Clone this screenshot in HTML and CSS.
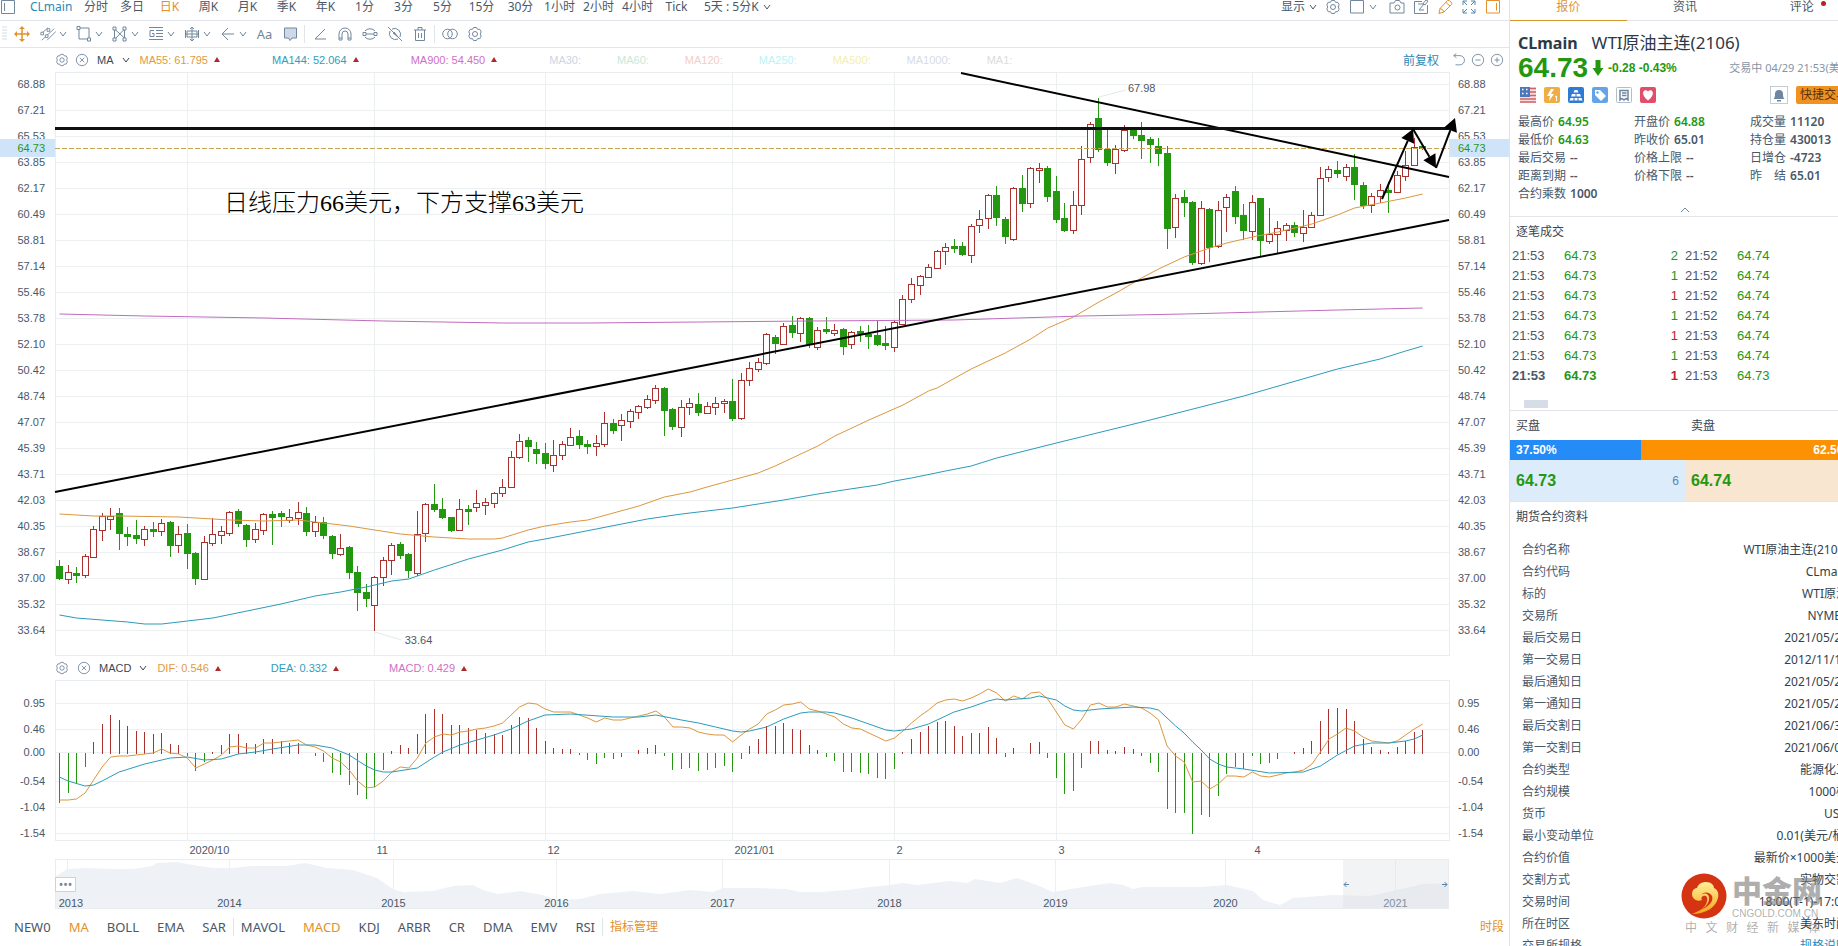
FILE: index.html
```html
<!DOCTYPE html>
<html lang="zh-CN">
<head>
    <meta charset="UTF-8">
    <title>CLmain WTI原油主连(2106)</title>
    <link rel="stylesheet" href="styles.css">
</head>
<body>
    <svg class="sprite" width="0" height="0">
        <symbol id="chev" viewBox="0 0 8 8"><path d="M1 2l3 4 3-4"/></symbol>
        <symbol id="gear" viewBox="0 0 16 16"><path d="M6.500 1.500h3l1 1.800h2.200l1.500 2.600-1 2.100 1 2.100-1.500 2.600h-2.200l-1 1.800h-3l-1-1.800H3.300L1.800 10.100l1-2.100-1-2.100 1.500-2.600h2.200z"/><circle cx="8" cy="8" r="2.500"/></symbol>
        <symbol id="close" viewBox="0 0 16 16"><circle cx="8" cy="8" r="6.500"/><path d="M5.500 5.500l5 5M10.500 5.500l-5 5"/></symbol>
    </svg>

    <div class="app">
        <main class="chart-side">
            <nav class="period-bar">
                <button class="icon-btn"><svg viewBox="0 0 16 16"><path d="M1.500 1.500h13v13h-13zM4.500 4v8"/></svg></button>
                <a class="symbol-name" href="#">CLmain</a>
                <a class="period narrow" href="#">分时</a>
                <a class="period narrow" href="#">多日</a>
                <a class="period active" href="#">日K</a>
                <a class="period" href="#">周K</a>
                <a class="period" href="#">月K</a>
                <a class="period" href="#">季K</a>
                <a class="period" href="#">年K</a>
                <a class="period" href="#">1分</a>
                <a class="period" href="#">3分</a>
                <a class="period" href="#">5分</a>
                <a class="period" href="#">15分</a>
                <a class="period" href="#">30分</a>
                <a class="period" href="#">1小时</a>
                <a class="period" href="#">2小时</a>
                <a class="period" href="#">4小时</a>
                <a class="period" href="#">Tick</a>
                <button class="custom-period">5天 : 5分K <svg class="chev"><use href="#chev"/></svg></button>
                <div class="period-tools">
                    <button class="menu-btn">显示<svg class="chev"><use href="#chev"/></svg></button>
                    <button class="icon-btn"><svg><use href="#gear"/></svg></button>
                    <button class="menu-btn layout-btn"><svg class="ic" viewBox="0 0 16 16"><path d="M1.500 1.500h13v12.500h-13z"/></svg><svg class="chev"><use href="#chev"/></svg></button>
                    <button class="icon-btn"><svg viewBox="0 0 16 16"><path d="M1 4h4l1.500-2.500h4L12 4h3v10H1z"/><circle cx="8.500" cy="8.500" r="2.500"/></svg></button>
                    <button class="icon-btn"><svg viewBox="0 0 16 16"><path d="M14.500 6v8.500h-13v-12H9M5 5h6l-5 6h5M10 4.500l3-3.500 2 1-3 4z"/></svg></button>
                    <button class="icon-btn orange"><svg viewBox="0 0 16 16"><path d="M2 14.500l1-5L10.500 1.500q2-.5 3.500 1.500t.5 2.500L7 13zM9 3.500l4 3.500M3 9.500q3 .5 4 3.500"/></svg></button>
                    <button class="icon-btn blue"><svg viewBox="0 0 16 16"><path d="M2 6V2h4M10 2h4v4M14 10v4h-4M6 14H2v-4M2 2l4 4M14 2l-4 4M14 14l-4-4M2 14l4-4"/></svg></button>
                    <button class="icon-btn orange"><svg viewBox="0 0 16 16"><path d="M1.500 1.500h13v12.500h-13zM11.500 4v7.500"/></svg></button>
                </div>
            </nav>

            <div class="draw-bar">
                <svg class="grip" viewBox="0 0 6 16"><path d="M0 1h5M0 4h5M0 7h5M0 10h5M0 13h5"/></svg>
                <button class="tool single orange"><svg class="ic" viewBox="0 0 16 16"><path d="M8 1v14M1 8h14" stroke-width="1.500"/><path d="M8 0l3 3H5zM8 16l3-3H5zM0 8l3-3v6zM16 8l-3-3v6z" fill="currentColor" stroke="none"/></svg></button>
                <button class="tool"><svg class="ic" viewBox="0 0 18 16"><path d="M2 15L16 2M8 15l10-10M1 8L9 1"/><path d="M1 6h3v3H1zM8 2h3v3H8zM6 9h3v3H6z" fill="#fff"/></svg><svg class="chev"><use href="#chev"/></svg></button>
                <button class="tool"><svg class="ic" viewBox="0 0 16 16"><path d="M3 2h10v11H3z"/><path d="M1 .5h3v3H1zM11.500 12h3v3h-3z" fill="#fff"/></svg><svg class="chev"><use href="#chev"/></svg></button>
                <button class="tool"><svg class="ic" viewBox="0 0 16 16"><path d="M2.500 14V3l10 9V3L3 13M12.500 3v11"/><path d="M1 1h3v3H1zM11 1h3v3h-3zM1 12h3v3H1zM11 12h3v3h-3z" fill="#fff"/></svg><svg class="chev"><use href="#chev"/></svg></button>
                <button class="tool"><svg class="ic" viewBox="0 0 16 16"><path d="M1 1.500h14M8 4.500h7M8 7.500h7M8 10.500h7M1 13.500h14M6 4.500H2v6h4v-3H4"/></svg><svg class="chev"><use href="#chev"/></svg></button>
                <button class="tool"><svg class="ic" viewBox="0 0 16 16"><path d="M8 1v14M1 8h14M1.500 4v8M14.500 4v8M3 5h10v6H3zM6 3l2-2 2 2M6 13l2 2 2-2"/></svg><svg class="chev"><use href="#chev"/></svg></button>
                <button class="tool"><svg class="ic" viewBox="0 0 16 16"><path d="M14 8H2M8 2L2 8l6 6"/></svg><svg class="chev"><use href="#chev"/></svg></button>
                <button class="tool single">Aa</button>
                <button class="tool single"><svg class="ic" viewBox="0 0 16 16"><path d="M2.500 2h12v10H10l-2 2.500L6.500 12h-4z" fill="#cdd9e6"/></svg></button>
                <span class="split"></span>
                <button class="tool single"><svg class="ic" viewBox="0 0 16 16"><path d="M13 3L3 13h11"/></svg></button>
                <button class="tool single"><svg class="ic" viewBox="0 0 16 16"><path d="M2 14V8a6 6 0 0 1 12 0v6h-3V8a3 3 0 0 0-6 0v6zM2 12h3M11 12h3"/></svg></button>
                <button class="tool single"><svg class="ic" viewBox="0 0 16 16"><path d="M3 5a6 5 0 0 1 10 0M3 11a6 5 0 0 0 10 0M4 8h8"/><path d="M1 6.500h3v3H1zM12 6.500h3v3h-3z"/></svg></button>
                <button class="tool single"><svg class="ic" viewBox="0 0 16 16"><path d="M5 3a6 6 0 0 1 8 8M11 13a6 6 0 0 1-8-8M1 1l14 14M7 6l4 5-5-4"/></svg></button>
                <button class="tool single"><svg class="ic" viewBox="0 0 16 16"><path d="M2 4h12M6 4V1.500h4V4M3.500 4v10.500h9V4M6.500 7v5M9.500 7v5"/></svg></button>
                <span class="split"></span>
                <button class="tool single"><svg class="ic" viewBox="0 0 16 16"><circle cx="5.500" cy="8" r="4.800"/><circle cx="10.500" cy="8" r="4.800"/></svg></button>
                <button class="tool single"><svg class="ic"><use href="#gear"/></svg></button>
            </div>

            <div class="legend">
                <button class="mini"><svg><use href="#gear"/></svg></button>
                <button class="mini"><svg><use href="#close"/></svg></button>
                <button class="study">MA<svg class="chev"><use href="#chev"/></svg></button>
                <span class="val c-ma55">MA55: 61.795</span>
                <span class="val c-ma144">MA144: 52.064</span>
                <span class="val c-ma900">MA900: 54.450</span>
                <span class="idle c-ma30">MA30:</span>
                <span class="idle c-ma60">MA60:</span>
                <span class="idle c-ma120">MA120:</span>
                <span class="idle c-ma250">MA250:</span>
                <span class="idle c-ma500">MA500:</span>
                <span class="idle c-ma1000">MA1000:</span>
                <span class="idle c-ma1">MA1:</span>
                <div class="legend-tools">
                    <a href="#">前复权</a>
                    <button class="mini"><svg viewBox="0 0 16 16"><path d="M2 3h7a5 5 0 0 1 0 10.500H4M5 .5L2 3l3 2.500"/></svg></button>
                    <button class="mini"><svg viewBox="0 0 16 16"><circle cx="8" cy="8" r="6.500"/><path d="M5 8h6"/></svg></button>
                    <button class="mini"><svg viewBox="0 0 16 16"><circle cx="8" cy="8" r="6.500"/><path d="M5 8h6M8 5v6"/></svg></button>
                </div>
            </div>

            <div class="pane price-pane">
                <div class="axis axis-left"><ol id="price-left"></ol><span class="tag">64.73</span></div>
                <svg class="plot" id="price-plot"></svg>
                <div class="axis axis-right"><ol id="price-right"></ol><span class="tag">64.73</span></div>
                <p class="note">日线压力66美元，下方支撑63美元</p>
            </div>

            <div class="legend macd-legend">
                <button class="mini"><svg><use href="#gear"/></svg></button>
                <button class="mini"><svg><use href="#close"/></svg></button>
                <button class="study">MACD<svg class="chev"><use href="#chev"/></svg></button>
                <span class="val c-ma55">DIF: 0.546</span>
                <span class="val c-ma144">DEA: 0.332</span>
                <span class="val c-ma900">MACD: 0.429</span>
            </div>

            <div class="pane macd-pane">
                <div class="axis axis-left"><ol id="macd-left"></ol></div>
                <svg class="plot" id="macd-plot"></svg>
                <div class="axis axis-right"><ol id="macd-right"></ol></div>
            </div>

            <div class="pane nav-pane">
                <svg class="plot" id="nav-plot"></svg>
                <button class="more">•••</button>
            </div>

            <footer class="study-bar">
                <a href="#">NEW0</a>
                <a class="active" href="#">MA</a>
                <a href="#">BOLL</a>
                <a href="#">EMA</a>
                <a href="#">SAR</a>
                <span class="split"></span>
                <a href="#">MAVOL</a>
                <a class="active" href="#">MACD</a>
                <a href="#">KDJ</a>
                <a href="#">ARBR</a>
                <a href="#">CR</a>
                <a href="#">DMA</a>
                <a href="#">EMV</a>
                <a href="#">RSI</a>
                <span class="split"></span>
                <a class="active cn" href="#">指标管理</a>
                <a class="active cn session" href="#">时段</a>
            </footer>
        </main>

        <aside class="quote-side">
            <div class="quote">
                <nav class="tabs">
                    <a class="active" href="#">报价</a>
                    <a href="#">资讯</a>
                    <a href="#">评论<i class="dot"></i></a>
                </nav>

                <section class="summary">
                    <h1><b>CLmain</b>WTI原油主连(2106)</h1>
                    <div class="last">
                        <strong>64.73</strong>
                        <svg viewBox="0 0 12 18"><path d="M3.500 1h5v8h3L6 17 .5 9h3z"/></svg>
                        <span class="change">-0.28 -0.43%</span>
                        <span class="status">交易中 04/29 21:53(美东)</span>
                    </div>
                    <div class="badges">
                        <svg viewBox="0 0 16 16"><path d="M0 0h16v16H0z" fill="#f6dede"/><path d="M0 1.500h16M0 5h16M0 8.500h16M0 12h16M0 15h16" stroke="#cc6468" stroke-width="1.500"/><path d="M0 0h10v10H0z" fill="#4c78ba"/><path d="M2 2.500h1.500M6 2.500h1.500M2 6.500h1.500M6 6.500h1.500" stroke="#fff" stroke-width="1.500"/></svg>
                        <svg viewBox="0 0 16 16"><rect width="16" height="16" rx="2" fill="#f0ad43"/><path d="M7 2L3 9h3l-1 5 5-7H7l3-5z" fill="#fff"/><path d="M11 10l1.500-1v5" fill="none" stroke="#fff"/></svg>
                        <svg viewBox="0 0 16 16"><rect width="16" height="16" rx="2" fill="#2d7bd3"/><path d="M6.500 3h3l1 2.500h-5zM4 7h3.500v2.500H3zM8.500 7H12l1 2.500H8.500zM2.500 11h3v2.500h-4zM6.500 11h3v2.500h-3zM10.500 11h3l1 2.500h-4z" fill="#fff"/></svg>
                        <svg viewBox="0 0 16 16"><rect width="16" height="16" rx="2" fill="#62a5e6"/><path d="M3 3h5l6 6-5 5-6-6z" fill="#fff"/><circle cx="5.500" cy="5.500" r="1.200" fill="#62a5e6"/></svg>
                        <svg viewBox="0 0 16 16"><rect x=".5" y=".5" width="15" height="15" rx="1" fill="#fff" stroke="#b4becb"/><path d="M4 3.500h8v9.500l-2-1.500-2 1.500-2-1.500L4 13zM6 6h4.500M6 8.500h4.500" fill="none" stroke="#6f86a0" stroke-width="1.500"/></svg>
                        <svg viewBox="0 0 16 16"><rect width="16" height="16" rx="2" fill="#e04e69"/><path d="M8 13.500C-1 7 4.500 .5 8 4.500 11.500.5 17 7 8 13.500z" fill="#fff"/></svg>
                        <button class="bell"><svg viewBox="0 0 16 16"><path d="M2.500 12q1.500-1 1.500-5a4 4 0 0 1 8 0q0 4 1.500 5zM6 13h4v1.500H6z"/></svg></button>
                        <button class="trade">快捷交易</button>
                    </div>
                    <dl class="stats">
                        <div><dt>最高价</dt><dd class="down">64.95</dd></div>
                        <div><dt>开盘价</dt><dd class="down">64.88</dd></div>
                        <div><dt>成交量</dt><dd>11120</dd></div>
                        <div><dt>最低价</dt><dd class="down">64.63</dd></div>
                        <div><dt>昨收价</dt><dd>65.01</dd></div>
                        <div><dt>持仓量</dt><dd>430013</dd></div>
                        <div><dt>最后交易</dt><dd>--</dd></div>
                        <div><dt>价格上限</dt><dd>--</dd></div>
                        <div><dt>日增仓</dt><dd>-4723</dd></div>
                        <div><dt>距离到期</dt><dd>--</dd></div>
                        <div><dt>价格下限</dt><dd>--</dd></div>
                        <div><dt>昨　结</dt><dd>65.01</dd></div>
                        <div><dt>合约乘数</dt><dd>1000</dd></div>
                    </dl>
                    <button class="fold"><svg viewBox="0 0 10 6"><path d="M1 5l4-4 4 4"/></svg></button>
                </section>

                <section class="ticks">
                    <h2>逐笔成交</h2>
                    <table>
                        <tr><td>21:53</td><td class="px">64.73</td><td class="vol">2</td><td>21:52</td><td class="px">64.74</td></tr>
                        <tr><td>21:53</td><td class="px">64.73</td><td class="vol">1</td><td>21:52</td><td class="px">64.74</td></tr>
                        <tr><td>21:53</td><td class="px">64.73</td><td class="vol buy">1</td><td>21:52</td><td class="px">64.74</td></tr>
                        <tr><td>21:53</td><td class="px">64.73</td><td class="vol">1</td><td>21:52</td><td class="px">64.74</td></tr>
                        <tr><td>21:53</td><td class="px">64.73</td><td class="vol buy">1</td><td>21:53</td><td class="px">64.74</td></tr>
                        <tr><td>21:53</td><td class="px">64.73</td><td class="vol">1</td><td>21:53</td><td class="px">64.74</td></tr>
                        <tr><td class="new">21:53</td><td class="px new">64.73</td><td class="vol buy new">1</td><td>21:53</td><td class="px">64.73</td></tr>
                    </table>
                    <div class="thumb"></div>
                </section>

                <section class="book">
                    <div class="book-head"><h2>买盘</h2><h2>卖盘</h2></div>
                    <div class="ratio"><span class="bid-ratio" style="width: 37.5%">37.50%</span><span class="ask-ratio">62.50%</span></div>
                    <div class="best">
                        <div class="bid"><b>64.73</b><span>6</span></div>
                        <div class="ask"><b>64.74</b></div>
                    </div>
                </section>

                <section class="contract">
                    <h2>期货合约资料</h2>
                    <table>
                        <tr><th>合约名称</th><td>WTI原油主连(2106)</td></tr>
                        <tr><th>合约代码</th><td>CLmain</td></tr>
                        <tr><th>标的</th><td>WTI原油</td></tr>
                        <tr><th>交易所</th><td>NYMEX</td></tr>
                        <tr><th>最后交易日</th><td>2021/05/20</td></tr>
                        <tr><th>第一交易日</th><td>2012/11/19</td></tr>
                        <tr><th>最后通知日</th><td>2021/05/24</td></tr>
                        <tr><th>第一通知日</th><td>2021/05/24</td></tr>
                        <tr><th>最后交割日</th><td>2021/06/30</td></tr>
                        <tr><th>第一交割日</th><td>2021/06/01</td></tr>
                        <tr><th>合约类型</th><td>能源化工</td></tr>
                        <tr><th>合约规模</th><td>1000桶</td></tr>
                        <tr><th>货币</th><td>USD</td></tr>
                        <tr><th>最小变动单位</th><td>0.01(美元/桶)</td></tr>
                        <tr><th>合约价值</th><td>最新价×1000美元</td></tr>
                        <tr><th>交割方式</th><td>实物交割</td></tr>
                        <tr><th>交易时间</th><td>18:00(T-1)-17:00</td></tr>
                        <tr><th>所在时区</th><td>美东时间</td></tr>
                        <tr><th>交易所规格</th><td><a href="#">规格说明</a></td></tr>
                    </table>
                </section>
            </div>

            <div class="watermark">
                <div class="brand">
                    <svg viewBox="0 0 46 46">
                        <defs><linearGradient id="gold" x1="0" y1="0" x2="0" y2="1"><stop offset="0" stop-color="#fff09a"/><stop offset="1" stop-color="#f5a51d"/></linearGradient></defs>
                        <circle cx="23" cy="23" r="22.500" fill="#d53413"/>
                        <path d="M11 41c8-3 14-7 15-13 1-4-1-6-4-5-2 1-2 3-1 4-5 2-10-1-10-6 0-4 3-6 5-6 1-4 5-6 9-6 5 0 8 3 8 6 4 2 5 6 4 10-2 9-12 16-26 16z" fill="url(#gold)"/>
                        <path d="M20 22c4-3 9-1 8 5-1 5-5 8-9 10 9-3 14-9 12-14-2-4-8-5-11-1z" fill="#d53413"/>
                    </svg>
                    <div><b>中金网</b><span>CNGOLD.COM.CN</span></div>
                </div>
                <p><span>中</span><span>文</span><span>财</span><span>经</span><span>新</span><span>媒</span><span>体</span></p>
            </div>
        </aside>
    </div>

    <script src="chart.js"></script>
</body>
</html>
```
FILE: styles.css
```css
* {
    box-sizing: border-box;
}

body, html {
    margin: 0;
    padding: 0;
    height: 100%;
    overflow: hidden;
    background: #fff;
    color: #4a5868;
    font-family: "Noto Sans", "Noto Sans CJK SC", sans-serif;
    font-size: 12px;
    line-height: 16px;
}

a {
    color: inherit;
    text-decoration: none;
}

button {
    display: flex;
    align-items: center;
    margin: 0;
    padding: 0;
    border: none;
    background: none;
    color: #71879d;
    font: inherit;
    cursor: pointer;
}

h1, h2, p, ol, dl, dd {
    margin: 0;
    padding: 0;
    font-weight: normal;
}

ol {
    list-style: none;
}

svg {
    display: block;
    flex: none;
}

button svg {
    fill: none;
    stroke: currentColor;
}

.sprite {
    position: absolute;
}

.chev {
    width: 8px;
    height: 8px;
}

.orange {
    color: #e2912b;
}

.blue {
    color: #5687ac;
}

.split {
    width: 1px;
    height: 18px;
    background: #e0e5ea;
}

.app {
    display: grid;
    grid-template-columns: minmax(0, 1fr) 329px;
    height: 100%;
}

/* top bars */

.period-bar {
    display: flex;
    align-items: center;
    height: 21px;
    padding-bottom: 6px;
    border-bottom: 1px solid #e1e5e9;
}

.icon-btn svg {
    width: 16px;
    height: 16px;
}

.symbol-name {
    width: 62px;
    padding-left: 14px;
    color: #2a8ab8;
}

.period {
    width: 39px;
    text-align: center;
}

.period.narrow {
    width: 36px;
}

.period.active {
    color: #e2912b;
}

.custom-period {
    gap: 4px;
    padding-left: 8px;
    color: #4a5868;
}

.period-tools {
    display: flex;
    gap: 8px;
    margin-left: auto;
    padding-right: 8px;
}

.menu-btn {
    gap: 4px;
}

.menu-btn:first-child {
    color: #4a5868;
}

.layout-btn {
    margin-right: 4px;
}

.draw-bar {
    display: flex;
    align-items: center;
    height: 27px;
    border-bottom: 1px solid #e1e5e9;
}

.grip {
    width: 6px;
    height: 16px;
    margin-left: 2px;
    stroke: #d7dde3;
}

.ic {
    width: 16px;
    height: 16px;
}

.tool {
    gap: 3px;
    width: 36px;
    padding-left: 4px;
    font-size: 13px;
}

.tool.single {
    justify-content: center;
    width: 25px;
    padding: 0;
}

.draw-bar .orange {
    width: 28px;
}

.draw-bar .split {
    margin: 0 2px;
}

/* legends */

.legend {
    display: flex;
    align-items: center;
    height: 23px;
    padding-left: 55px;
    font-family: "Liberation Sans", Arial, sans-serif;
    font-size: 11px;
}

.mini {
    margin-right: 6px;
}

.mini svg {
    width: 14px;
    height: 14px;
}

.study {
    gap: 8px;
    margin: 0 10px 0 2px;
    color: #3c4856;
}

.val {
    display: flex;
    align-items: center;
    margin-right: 52px;
}

.val::after {
    content: "";
    margin-left: 6px;
    border: 3px solid transparent;
    border-top: none;
    border-bottom: 5px solid #b0282c;
}

.idle {
    margin-right: 36px;
}

.macd-legend {
    height: 24px;
}

.macd-legend .mini {
    margin-right: 8px;
}

.macd-legend .study {
    margin-left: 0;
}

.macd-legend .val {
    margin-right: 50px;
}

.c-ma55 { color: #e19a43; }
.c-ma144 { color: #2ca0bd; }
.c-ma900 { color: #cf6fc6; }
.c-ma30 { color: #cbd5e6; }
.c-ma60 { color: #c8e9d8; }
.c-ma120 { color: #f4cdc9; }
.c-ma250 { color: #b9f3f7; }
.c-ma500 { color: #f3efb0; }
.c-ma1000 { color: #d5dce8; }
.c-ma1 { color: #dcdcdc; }

.legend-tools {
    display: flex;
    align-items: center;
    margin-left: auto;
    font-family: "Noto Sans CJK SC", sans-serif;
    font-size: 12px;
}

.legend-tools .mini {
    margin-right: 5px;
}

.legend-tools a {
    margin-right: 13px;
    color: #2f88b5;
}

/* chart panes */

.pane {
    display: grid;
    grid-template-columns: 55px minmax(0, 1fr) 60px;
    position: relative;
}

.plot {
    width: 100%;
    overflow: visible;
    font-family: "Liberation Sans", Arial, sans-serif;
    font-size: 11px;
    fill: #4a5868;
}

.price-pane .plot {
    height: 585px;
}

.macd-pane .plot {
    height: 179px;
}

.nav-pane .plot {
    grid-column: 2;
    height: 50px;
}

.axis {
    position: relative;
    font-family: "Liberation Sans", Arial, sans-serif;
    font-size: 11px;
}

.axis li {
    height: 26px;
    line-height: 26px;
}

.axis-left {
    padding-right: 10px;
    text-align: right;
}

.axis-right {
    padding-left: 9px;
}

.macd-pane .axis {
    padding-top: 10px;
}

.macd-pane li:nth-child(3) {
    height: 20px;
    margin-bottom: 6px;
    line-height: 20px;
}

.tag {
    position: absolute;
    top: 68px;
    left: 0;
    right: 0;
    height: 18px;
    padding: inherit;
    background: #cfe4f9;
    color: #249711;
    line-height: 18px;
}

.note {
    position: absolute;
    top: 116px;
    left: 224px;
    color: #000;
    font-family: "Liberation Serif", "Noto Sans CJK SC", serif;
    font-size: 24px;
    font-weight: 300;
    line-height: 32px;
}

.grid {
    stroke: #ecf0f1;
    shape-rendering: crispEdges;
}

.frame {
    fill: none;
    stroke: #e9edef;
    shape-rendering: crispEdges;
}

.up {
    fill: #fff;
    stroke: #a9322f;
    shape-rendering: crispEdges;
}

.dn {
    fill: #249711;
    stroke: #249711;
    shape-rendering: crispEdges;
}

.line {
    fill: none;
}

.line-ma55 { stroke: #dc963f; }
.line-ma144 { stroke: #2c9aba; }
.line-ma900 { stroke: #bf6cbe; }

.last-line {
    stroke: #c8a552;
    stroke-dasharray: 5 2;
    shape-rendering: crispEdges;
}

.lead {
    stroke: #e3e8ea;
}

.trend {
    fill: none;
    stroke: #000;
    stroke-width: 2;
}

.level {
    stroke: #111;
    stroke-width: 3;
}

.arrow {
    fill: #000;
}

.nav-area {
    fill: #eef2f6;
}

.nav-window {
    fill: #dbe0e6;
    opacity: 0.4;
}

.nav-arrow {
    fill: none;
    stroke: #5f83a8;
}

.more {
    position: absolute;
    left: 55px;
    top: 18px;
    justify-content: center;
    width: 21px;
    height: 15px;
    border: 1px solid #ccd3da;
    background: #fff;
    font-size: 12px;
}

.study-bar {
    display: flex;
    align-items: center;
    height: 36px;
    padding: 0 5px;
    font-size: 13px;
}

.study-bar a {
    padding: 0 9px;
}

.study-bar .split {
    margin: 0 -2px;
}

.study-bar .active {
    color: #e2912b;
}

.study-bar .cn {
    font-size: 12px;
}

.study-bar .session {
    margin-left: auto;
    padding-right: 0;
}

/* quote panel */

.quote-side {
    position: relative;
    height: 100%;
    overflow: hidden;
    border-left: 1px solid #dfe3e7;
}

/* the panel is wider than its column, the right edge slides out of view */
.quote {
    width: 350px;
}

.tabs {
    display: flex;
    height: 21px;
    border-bottom: 1px solid #e1e5e9;
    text-align: center;
}

.tabs a {
    position: relative;
    flex: 1;
    height: 21px;
    line-height: 14px;
}

.tabs .active {
    border-bottom: 1px solid #d7952f;
    color: #dd9736;
}

.dot {
    position: absolute;
    left: 78px;
    top: 1px;
    width: 5px;
    height: 5px;
    border-radius: 50%;
    background: #b9201f;
}

.summary {
    padding: 10px 0 0 8px;
    border-bottom: 1px solid #e1e5e9;
}

h1 {
    color: #2c3947;
    font-size: 17px;
    line-height: 24px;
}

h1 b {
    margin-right: 14px;
    font-size: 16px;
}

.last {
    display: flex;
    align-items: center;
    height: 26px;
    padding-right: 6px;
}

.last strong {
    color: #249711;
    font-family: "Liberation Sans", Arial, sans-serif;
    font-size: 28px;
    line-height: 26px;
}

.last svg {
    width: 12px;
    height: 18px;
    margin: 0 4px;
    fill: #249711;
}

.change {
    color: #249711;
    font-family: "Liberation Sans", Arial, sans-serif;
    font-weight: bold;
}

.status {
    margin-left: auto;
    color: #8794a3;
    font-size: 11px;
    white-space: nowrap;
}

.badges {
    display: flex;
    align-items: center;
    gap: 8px;
    height: 28px;
    padding: 0 8px 0 2px;
}

.badges svg {
    width: 16px;
    height: 16px;
}

.bell {
    margin-left: auto;
    border: 1px solid #c3ccd6;
}

.bell svg {
    fill: #6f86a0;
    stroke: none;
}

.trade {
    height: 18px;
    padding: 0 4px;
    border-radius: 2px;
    background: #f09221;
    color: #5a3408;
}

.stats {
    display: grid;
    grid-template-columns: repeat(3, 116px);
    padding-top: 4px;
}

.stats div {
    display: flex;
    gap: 4px;
    height: 18px;
    line-height: 18px;
}

.stats dd {
    font-weight: 600;
}

.stats .down {
    color: #249711;
}

.fold {
    justify-content: center;
    width: 334px;
    height: 13px;
}

.fold svg {
    width: 10px;
    height: 6px;
}

h2 {
    padding-left: 6px;
    color: #3a4653;
    font-size: 12px;
    line-height: 29px;
}

.ticks {
    border-bottom: 1px solid #e1e5e9;
}

table {
    border-spacing: 0;
}

.ticks table {
    table-layout: fixed;
    width: 277px;
    font-family: "Liberation Sans", Arial, sans-serif;
    font-size: 13px;
}

.ticks td {
    width: 52px;
    height: 20px;
    padding: 0 0 0 2px;
}

.ticks .vol {
    width: 69px;
    padding-right: 5px;
    text-align: right;
}

.ticks .px, .ticks .vol {
    color: #249711;
}

.ticks .vol.buy {
    color: #c02128;
}

.new {
    font-weight: bold;
}

.thumb {
    width: 24px;
    height: 8px;
    margin: 14px 14px 2px;
    background: #d7dde6;
}

.book-head {
    display: grid;
    grid-template-columns: 1fr 1fr;
}

.ratio {
    display: flex;
    height: 20px;
    color: #fff;
    font-family: "Liberation Sans", Arial, sans-serif;
    font-weight: bold;
    line-height: 20px;
}

.bid-ratio {
    padding-left: 6px;
    background: #258bf6;
}

.ask-ratio {
    flex: 1;
    padding-right: 6px;
    background: #fd9104;
    text-align: right;
}

.best {
    display: grid;
    grid-template-columns: 1fr 1fr;
    height: 42px;
    border-bottom: 1px solid #e1e5e9;
    font-family: "Liberation Sans", Arial, sans-serif;
}

.best div {
    display: flex;
    align-items: center;
    justify-content: space-between;
    padding: 0 6px;
}

.best b {
    color: #249711;
    font-size: 16px;
}

.best span {
    color: #5687ac;
}

.bid {
    background: #dcecfb;
}

.ask {
    background: #f8e6d0;
}

.contract table {
    width: 100%;
    margin-top: 8px;
    padding: 0 12px;
}

.contract th, .contract td {
    height: 22px;
    padding: 0;
    font-weight: normal;
    text-align: left;
    white-space: nowrap;
}

.contract td {
    color: #333f4c;
    text-align: right;
}

.contract td a {
    color: #2a8ab8;
}

.watermark {
    position: absolute;
    right: 14px;
    bottom: 10px;
    width: 143px;
    color: rgba(120, 120, 120, 0.6);
}

.brand {
    display: flex;
    gap: 5px;
}

.brand svg {
    width: 46px;
    height: 46px;
}

.brand b {
    display: block;
    font-size: 30px;
    font-weight: 900;
    line-height: 36px;
}

.brand span {
    display: block;
    font-family: "Liberation Sans", Arial, sans-serif;
    font-size: 10px;
    line-height: 10px;
}

.watermark p {
    display: flex;
    justify-content: space-between;
    padding: 0 4px;
    line-height: 17px;
}
```
FILE: chart.js
```js
// [direction, high, body top, body bottom, low], in pane units
const candles = [
    ['d',560,566,579,580],['u',565,572,579,584],['d',567,573,576,583],['u',554,556,575,578],['u',526,529,557,558],
    ['u',513,516,530,541],['u',508,516,519,530],['d',508,513,534,550],['d',527,534,537,546],['d',520,535,539,544],
    ['u',526,529,539,546],['d',522,529,532,537],['u',519,523,531,536],['d',521,522,546,557],['u',526,534,545,553],
    ['d',524,533,554,569],['d',552,553,579,585],['u',536,542,579,579],['u',518,534,543,546],['u',526,531,535,544],
    ['u',511,512,533,536],['d',509,511,524,527],['d',524,525,540,547],['u',523,529,539,543],['u',513,514,530,535],
    ['d',511,514,518,545],['d',511,513,517,527],['u',509,517,520,523],['u',502,512,518,525],['d',507,513,532,536],
    ['u',516,522,531,537],['d',517,522,536,539],['d',535,536,554,559],['u',534,548,554,556],['d',546,547,573,579],
    ['d',566,572,593,611],['d',584,592,599,607],['u',576,577,605,631],['u',557,560,577,586],['u',543,545,560,575],
    ['d',542,544,556,559],['d',553,554,571,578],['u',511,534,573,576],['u',503,504,533,542],['d',484,504,510,512],
    ['d',498,509,518,519],['d',517,517,531,532],['u',499,509,530,531],['d',505,509,512,525],['u',490,503,507,512],
    ['u',498,502,505,515],['u',492,493,503,508],['u',479,487,493,497],['u',451,457,487,488],['u',434,441,457,459],
    ['d',437,440,447,462],['d',442,449,454,464],['d',443,453,464,469],['u',440,455,465,472],['u',441,444,455,460],
    ['u',428,437,445,446],['d',430,436,445,449],['d',440,444,447,454],['u',435,443,446,456],['u',412,423,444,447],
    ['d',419,423,431,434],['u',414,420,425,441],['u',409,411,421,428],['u',405,406,412,419],['u',395,399,407,409],
    ['u',385,388,400,404],['d',387,388,411,436],['d',408,409,427,430],['u',400,407,427,437],['u',398,403,407,415],
    ['d',393,404,413,416],['u',402,406,413,413],['u',397,403,407,415],['u',399,401,403,413],['d',379,401,419,421],
    ['u',373,380,418,420],['u',362,368,380,386],['u',358,362,369,372],['u',333,334,363,365],['d',335,337,344,354],
    ['u',323,326,344,345],['d',316,325,333,338],['u',317,318,333,342],['d',317,318,345,348],['u',327,330,347,350],
    ['d',317,329,332,334],['u',324,330,333,336],['d',328,329,347,355],['u',331,332,344,349],['d',326,331,334,342],
    ['d',325,334,337,349],['d',321,335,345,346],['d',326,343,346,350],['u',320,322,347,352],['u',295,299,324,325],
    ['u',278,284,299,303],['u',275,276,285,295],['u',264,267,277,278],['u',250,251,268,269],['u',243,247,251,265],
    ['d',239,246,249,253],['d',242,246,255,256],['u',224,226,255,263],['u',210,219,225,233],['u',194,195,218,229],
    ['d',186,195,218,226],['d',217,219,237,244],['u',187,188,239,241],['d',175,188,204,212],['u',167,168,203,208],
    ['u',163,168,170,183],['d',166,168,197,202],['d',176,191,220,223],['d',203,218,231,232],['u',191,205,230,234],
    ['u',146,159,205,215],['u',122,124,157,163],['d',98,118,150,152],['d',130,149,163,166],['u',145,149,163,174],
    ['u',125,130,150,152],['d',127,129,136,139],['d',122,135,141,159],['d',137,139,145,163],['d',138,146,154,166],
    ['d',146,153,229,249],['u',194,198,227,238],['d',190,197,203,217],['d',201,202,263,265],['u',201,208,263,265],
    ['d',208,209,248,262],['u',201,210,246,248],['u',194,197,207,232],['d',186,191,217,224],['d',204,215,231,240],
    ['u',195,202,231,240],['d',198,198,241,256],['u',208,234,241,244],['u',221,228,234,253],['u',223,225,230,241],
    ['d',222,225,233,237],['u',210,227,233,242],['u',212,215,227,228],['u',167,178,215,216],['u',166,169,177,182],
    ['d',161,170,174,178],['u',164,167,176,181],['d',154,167,185,200],['d',182,185,206,209],['u',193,196,205,213],
    ['u',184,190,196,203],['d',182,190,193,213],['u',171,175,192,193],['u',151,165,176,181],['u',138,147,165,166],
    ['d',145,146,149,150]
];

const ma55 = [[0,514],[4,516],[7,516],[14,517],[20,520],[24,521],[28,520],[31,523],[34,526],[37,530],[40,534],[44,537],[48,539],[51,539],[52,538],[55,530],[57,526],[60,522],[62,520],[68,506],[71,497],[74,492],[76,487],[79,480],[82,473],[84,466],[89,446],[91,436],[95,420],[99,405],[102,391],[103,388],[107,369],[111,353],[114,339],[116,328],[119,317],[122,302],[124,293],[127,278],[129,269],[132,257],[135,248],[137,243],[140,237],[143,232],[147,224],[150,215],[152,208],[155,203],[158,198],[160,194]];
const ma144 = [[0,615],[2,618],[5,620],[8,622],[10,624],[12,624],[15,621],[18,618],[22,611],[26,604],[30,596],[33,592],[36,587],[39,581],[41,579],[44,570],[48,559],[52,550],[55,542],[57,539],[60,534],[63,529],[66,524],[69,519],[73,514],[77,510],[79,508],[82,504],[85,500],[89,494],[92,490],[96,485],[98,481],[100,478],[104,471],[107,466],[110,458],[117,443],[128,420],[139,396],[150,369],[155,359],[158,351],[160,346]];
const ma900 = [[0,314],[10,316],[24,318],[38,321],[52,323],[62,323],[75,322],[88,321],[105,320],[120,316],[132,314],[150,310],[160,308]];

const hist = [803,793,784,767,742,724,715,720,726,731,732,734,733,744,745,756,771,762,752,745,734,734,743,744,739,739,741,743,743,753,756,762,773,775,785,795,799,787,770,751,745,748,734,714,709,714,725,725,728,730,733,734,735,725,717,718,728,741,748,749,749,755,760,764,758,759,757,753,750,748,745,756,770,769,768,771,770,768,766,772,759,746,739,726,726,723,729,730,745,750,757,761,772,772,773,774,778,779,769,752,739,732,726,722,721,726,736,733,733,727,738,757,748,753,743,742,758,778,794,791,768,741,741,750,751,747,749,756,763,772,809,813,813,834,815,817,796,774,767,769,756,764,763,759,753,752,748,741,721,709,708,709,721,739,747,750,752,747,741,732,730];
const dif = [800,800,799,793,780,767,757,756,756,755,754,753,749,753,754,758,768,764,760,755,747,746,748,748,743,743,742,741,740,745,747,751,758,762,770,781,788,787,781,772,767,768,758,743,737,734,735,732,731,729,728,726,723,715,707,703,704,709,712,712,712,715,718,722,718,720,720,718,716,714,711,717,727,727,728,732,734,735,735,742,735,729,724,714,710,705,704,702,709,711,714,717,724,728,729,733,737,741,738,731,723,716,710,703,700,699,701,698,694,689,693,701,696,699,693,692,699,712,725,729,719,705,703,707,707,704,706,708,713,720,746,756,762,782,781,789,784,776,776,777,772,776,777,775,773,772,770,764,752,739,734,728,731,737,741,742,743,741,735,729,724];
const dea = [[0,777],[1,781],[3,786],[4,785],[5,781],[7,772],[10,764],[13,758],[15,757],[17,760],[19,759],[21,754],[23,752],[25,749],[28,745],[30,745],[32,748],[34,755],[36,766],[37,770],[38,772],[39,772],[42,768],[44,757],[45,752],[47,745],[49,740],[51,735],[52,732],[53,729],[54,725],[55,721],[57,715],[60,714],[65,717],[68,717],[70,715],[73,720],[75,723],[77,727],[79,731],[80,732],[81,731],[83,727],[85,719],[87,713],[88,712],[90,712],[91,713],[93,718],[95,724],[97,730],[98,731],[100,729],[102,724],[104,716],[105,712],[107,707],[109,701],[110,699],[111,700],[114,698],[115,696],[116,698],[117,700],[118,706],[119,710],[120,711],[122,709],[126,707],[128,708],[129,710],[131,726],[132,733],[133,742],[134,750],[135,759],[136,764],[137,767],[139,769],[142,773],[146,772],[148,766],[150,755],[152,746],[154,743],[156,743],[158,741],[159,739],[160,735]];

// navigator outline
const history = [[0,877],[12,869],[32,868],[55,869],[78,869],[97,866],[102,863],[122,862],[138,865],[158,868],[178,868],[197,866],[232,866],[250,863],[272,868],[298,870],[322,878],[338,889],[348,892],[378,891],[398,886],[418,885],[428,890],[443,894],[465,891],[488,895],[502,900],[525,899],[545,894],[578,891],[605,894],[635,890],[658,892],[668,888],[698,888],[732,889],[745,892],[765,892],[792,890],[815,887],[835,885],[848,883],[862,885],[895,881],[912,883],[920,879],[945,883],[962,878],[982,885],[998,892],[1028,887],[1055,883],[1068,885],[1078,889],[1088,887],[1145,887],[1172,885],[1198,891],[1208,900],[1225,905],[1238,898],[1278,895],[1315,896],[1342,890],[1368,884],[1393,883]];

const months = [[15,'2020/10'],[37,'11'],[57,'12'],[79,'2021/01'],[98,'2'],[117,'3'],[140,'4']];
const years = [[12,'2013'],[174,'2014'],[338,'2015'],[501,'2016'],[667,'2017'],[834,'2018'],[1000,'2019'],[1170,'2020'],[1340,'2021']];
const prices = ['68.88','67.21','65.53','63.85','62.17','60.49','58.81','57.14','55.46','53.78','52.10','50.42','48.74','47.07','45.39','43.71','42.03','40.35','38.67','37.00','35.32','33.64'];
const macdTicks = [['0.95',703],['0.46',729],['0.00',752],['-0.54',781],['-1.04',807],['-1.54',833]];

const BASE_WIDTH = 1394;
const STEP = 8.52;
const FIRST = 4.5;
const ZERO = 753;

function line(cls, x1, y1, x2, y2) {
    return `<line class="${cls}" x1="${x1}" y1="${y1}" x2="${x2}" y2="${y2}"/>`;
}

function arrow(x1, y1, x2, y2) {
    const a = Math.atan2(y2 - y1, x2 - x1);
    const bx = x2 - 13 * Math.cos(a);
    const by = y2 - 13 * Math.sin(a);
    const dx = 7 * Math.sin(a);
    const dy = 7 * Math.cos(a);
    return line('trend', x1, y1, bx, by) +
        `<polygon class="arrow" points="${x2},${y2} ${bx + dx},${by - dy} ${bx - dx},${by + dy}"/>`;
}

function fillAxis(name, labels) {
    const html = labels.map(t => `<li>${t}</li>`).join('');
    document.getElementById(name + '-left').innerHTML = html;
    document.getElementById(name + '-right').innerHTML = html;
}

function draw() {
    const pricePlot = document.getElementById('price-plot');
    const macdPlot = document.getElementById('macd-plot');
    const navPlot = document.getElementById('nav-plot');
    const w = Math.round(pricePlot.getBoundingClientRect().width);
    const k = w / BASE_WIDTH;
    const at = i => (FIRST + i * STEP) * k;
    const mid = i => Math.floor(at(i)) + 0.5;
    const path = (cls, pts) => `<polyline class="line ${cls}" points="${pts.map(p => at(p[0]) + ',' + p[1]).join(' ')}"/>`;

    // price pane
    let s = `<rect class="frame" x="0.5" y="72.5" width="${w}" height="583"/>`;
    prices.forEach((p, i) => { s += line('grid', 1, 84.5 + i * 26, w, 84.5 + i * 26); });
    months.forEach(m => { s += line('grid', mid(m[0]), 73, mid(m[0]), 655); });
    candles.forEach((c, i) => {
        const x = mid(i);
        const cls = c[0] === 'u' ? 'up' : 'dn';
        const h = c[0] === 'u' ? c[3] - c[2] : Math.max(c[3] - c[2] - 1, 1);
        s += line(cls, x, c[1], x, c[4]);
        s += `<rect class="${cls}" x="${x - 3}" y="${c[2] + 0.5}" width="6" height="${h}"/>`;
    });
    s += path('line-ma55', ma55) + path('line-ma144', ma144) + path('line-ma900', ma900);
    s += line('last-line', 0, 148.5, w, 148.5);
    s += line('trend', 0, 492, w, 220);
    s += line('trend', 906 * k, 73, w, 177);
    s += line('level', 0, 128.5, w, 128.5);
    s += arrow(1327 * k, 199, 1358 * k, 129);
    s += arrow(1358 * k, 129, 1381 * k, 168);
    s += arrow(1381 * k, 168, 1400 * k, 118);
    s += line('lead', at(122), 97, at(122) + 27, 90) + `<text x="${at(122) + 29}" y="92">67.98</text>`;
    s += line('lead', at(37), 632, at(37) + 27, 640) + `<text x="${at(37) + 30}" y="644">33.64</text>`;
    pricePlot.setAttribute('viewBox', `0 71 ${w} 585`);
    pricePlot.innerHTML = s;

    // macd pane with month labels under it
    s = `<rect class="frame" x="0.5" y="680.5" width="${w}" height="160"/>`;
    macdTicks.forEach(t => { s += line('grid', 1, t[1] + 0.5, w, t[1] + 0.5); });
    months.forEach(m => {
        s += line('grid', mid(m[0]), 681, mid(m[0]), 840);
        s += `<text x="${mid(m[0]) + 2}" y="854">${m[1]}</text>`;
    });
    hist.forEach((v, i) => {
        if (v !== ZERO) {
            s += line(v < ZERO ? 'up' : 'dn', mid(i), v < ZERO ? 754 : ZERO, mid(i), v);
        }
    });
    s += path('line-ma55', dif.map((v, i) => [i, v])) + path('line-ma144', dea);
    macdPlot.setAttribute('viewBox', `0 680 ${w} 179`);
    macdPlot.innerHTML = s;

    // navigator
    s = `<polygon class="nav-area" points="0,908 ${history.map(p => p[0] * k + ',' + p[1]).join(' ')} ${w - 1},908"/>`;
    years.forEach(y => {
        const x = Math.floor(y[0] * k) + 0.5;
        s += line('grid', x, 860, x, 908);
        s += `<text x="${Math.max(x, 16)}" y="907" text-anchor="middle">${y[1]}</text>`;
    });
    s += `<rect class="nav-window" x="${1288 * k}" y="859" width="${106 * k}" height="50"/>`;
    s += `<path class="nav-arrow" d="M${1294 * k} 884.5h-5m2.500-2.500l-2.500 2.500 2.500 2.500M${1387 * k} 884.5h5m-2.500-2.500l2.500 2.500-2.500 2.500"/>`;
    s += `<rect class="frame" x="0.5" y="859.5" width="${w - 1}" height="49"/>`;
    navPlot.setAttribute('viewBox', `0 859 ${w} 50`);
    navPlot.innerHTML = s;
}

fillAxis('price', prices);
fillAxis('macd', macdTicks.map(t => t[0]));
draw();
window.addEventListener('resize', draw);
```
